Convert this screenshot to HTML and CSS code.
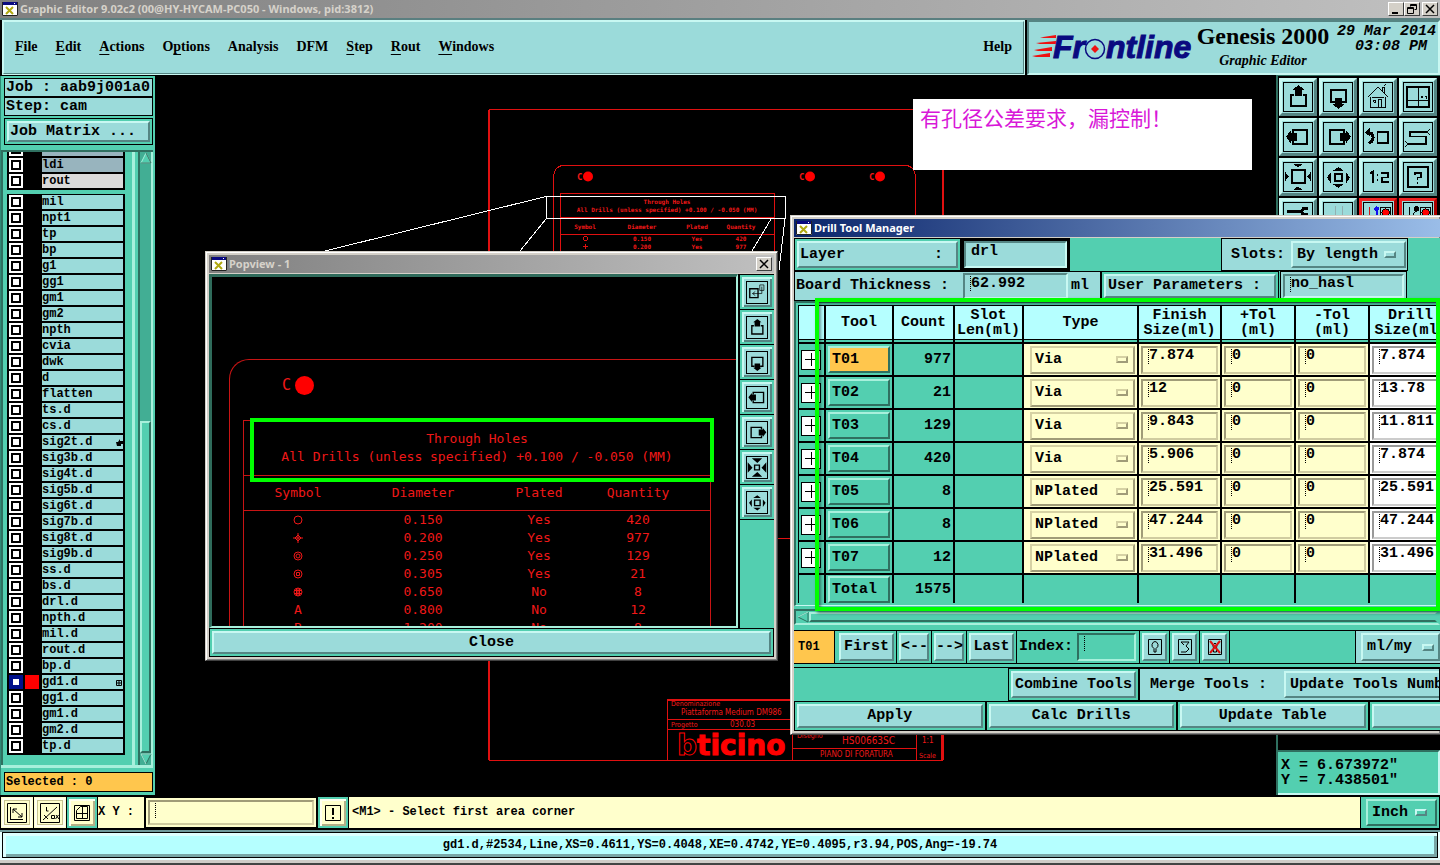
FILE: index.html
```
<!DOCTYPE html>
<html lang="en">
<head>
<meta charset="utf-8">
<title>Graphic Editor 9.02c2</title>
<link rel="stylesheet" href="styles.css">
</head>
<body>
<svg class="defs" aria-hidden="true">
  <symbol id="app" viewBox="0 0 16 14"><path fill="#fff" d="M0 0h16v14H0z"/><path fill="#0a0a80" d="M1 0h14v3H1z"/><path fill="#fff" d="M12 1h1v1h-1z"/><path stroke="#b0a810" stroke-width="2" d="M4 5l7 7M11 5l-7 7"/><path stroke="#222" fill="none" d="M.5 0v13.500h15V0"/></symbol>
  <symbol id="up" viewBox="0 0 29 29"><path d="M10 12H7v12h16V12h-3" fill="none" stroke-width="2"/><path class="f" d="M15 2l6 5h-2v6h-8V7H9z"/></symbol>
  <symbol id="down" viewBox="0 0 29 29"><path d="M11 20H7V7h16v13h-4" fill="none" stroke-width="2"/><path class="f" d="M15 27l6-5h-2v-6h-8v6H9z"/></symbol>
  <symbol id="left" viewBox="0 0 29 29"><path d="M9 10V7h15v15H9v-3" fill="none" stroke-width="2"/><path class="f" d="M2 14l5-6v2h6v9H7v2z"/></symbol>
  <symbol id="right" viewBox="0 0 29 29"><path d="M21 10V7H6v15h15v-3" fill="none" stroke-width="2"/><path class="f" d="M28 14l-5-6v2h-6v9h6v2z"/></symbol>
  <symbol id="in" viewBox="0 0 29 29"><path d="M8 7h14v14H8z" fill="none" stroke-width="2"/><path class="f" d="M10 1h9l-4.500 4zM10 28h9l-4.500-4zM1 9v10l4-5zM28 9v10l-4-5z"/></symbol>
  <symbol id="shrink" viewBox="0 0 29 29"><path d="M11 11h7v7h-7z" fill="none" stroke-width="2"/><path class="f" d="M7 1h15l-7 7zM7 28h15l-7-7zM1 7v15l7-7zM28 7v15l-7-7z"/></symbol>
  <symbol id="out" viewBox="0 0 29 29"><path d="M11 11h8v8h-8z" fill="none" stroke-width="2"/><path class="f" d="M9 8h11l-5-4zM9 22h11l-5 4zM7 10v11l-4-6zM23 10v11l4-6z"/></symbol>
  <symbol id="pop" viewBox="0 0 29 29"><path d="M4 9h12v13H4z" fill="none" stroke-width="2"/><path d="M18.500 3.500h6v8h-6zM21.500 6v10H8m4-3l-4 3 4 3" fill="none"/></symbol>
</svg>

<div class="titlebar app-title">
  <svg class="appicon"><use href="#app"/></svg>
  <h1>Graphic Editor 9.02c2 (00@HY-HYCAM-PC050 - Windows, pid:3812)</h1>
  <div class="winbtns">
    <button aria-label="Minimize"><svg viewBox="0 0 14 12"><path d="M3 9h6v2H3z"/></svg></button>
    <button aria-label="Restore"><svg viewBox="0 0 14 12"><path d="M5.500 3.500V1.500h6v5h-2M2.500 4.500h6v6h-6zM2 5.500h7M5 2.500h7" fill="none" stroke="#000"/></svg></button>
    <button class="apart" aria-label="Close"><svg viewBox="0 0 14 12"><path d="M3 2l8 8M11 2l-8 8" stroke="#000" stroke-width="1.500"/></svg></button>
  </div>
</div>

<header class="head">
  <nav class="menubar">
    <a href="#"><u>F</u>ile</a><a href="#"><u>E</u>dit</a><a href="#"><u>A</u>ctions</a><a href="#">O<u>p</u>tions</a><a href="#">Analysis</a><a href="#">DFM</a><a href="#"><u>S</u>tep</a><a href="#"><u>R</u>out</a><a href="#"><u>W</u>indows</a><a class="help" href="#">Help</a>
  </nav>
  <div class="brand">
    <svg class="frontline" viewBox="0 0 164 34" role="img" aria-label="Frontline">
      <g fill="#e11"><path d="M8 7.500L24 5v3H12zM4 13l20-2v3H8zM2 20l18-3v4H6zM0 26l18-3v4H4z"/></g>
      <text class="logo" x="21" y="28">Fr</text><text class="logo" x="74" y="28">ntline</text>
      <circle cx="63" cy="19" r="9.500" fill="none" stroke="#0a0a80" stroke-width="1.500"/><path d="M59 19l4-4 4 4-4 4z" fill="#e11"/>
    </svg>
    <div class="product"><strong>Genesis 2000</strong><em>Graphic Editor</em></div>
    <time>29 Mar 2014<br>03:08 PM&nbsp;</time>
  </div>
</header>

<main class="work">
  <aside class="side">
    <div class="jobline">Job : aab9j001a0</div>
    <div class="jobline">Step: cam</div>
    <div class="matrix"><button class="raised">Job Matrix ...</button></div>
    <div class="layers">
      <div class="list">
        <div class="group clipped">
          <label class="layer grey"><input type="checkbox"><i></i><span>drl</span></label>
          <label class="layer grey"><input type="checkbox"><i></i><span>ldi</span></label>
          <label class="layer pale"><input type="checkbox"><i></i><span>rout</span></label>
        </div>
        <div class="group">
          <label class="layer"><input type="checkbox"><i></i><span>mil</span></label>
          <label class="layer"><input type="checkbox"><i></i><span>npt1</span></label>
          <label class="layer"><input type="checkbox"><i></i><span>tp</span></label>
          <label class="layer"><input type="checkbox"><i></i><span>bp</span></label>
          <label class="layer"><input type="checkbox"><i></i><span>g1</span></label>
          <label class="layer"><input type="checkbox"><i></i><span>gg1</span></label>
          <label class="layer"><input type="checkbox"><i></i><span>gm1</span></label>
          <label class="layer"><input type="checkbox"><i></i><span>gm2</span></label>
          <label class="layer"><input type="checkbox"><i></i><span>npth</span></label>
          <label class="layer"><input type="checkbox"><i></i><span>cvia</span></label>
          <label class="layer"><input type="checkbox"><i></i><span>dwk</span></label>
          <label class="layer"><input type="checkbox"><i></i><span>d</span></label>
          <label class="layer"><input type="checkbox"><i></i><span>flatten</span></label>
          <label class="layer"><input type="checkbox"><i></i><span>ts.d</span></label>
          <label class="layer"><input type="checkbox"><i></i><span>cs.d</span></label>
          <label class="layer"><input type="checkbox"><i></i><span>sig2t.d<svg class="mark" viewBox="0 0 8 9"><path d="M1 4h2l2-3v2h3v3H6v2H2z"/></svg></span></label>
          <label class="layer"><input type="checkbox"><i></i><span>sig3b.d</span></label>
          <label class="layer"><input type="checkbox"><i></i><span>sig4t.d</span></label>
          <label class="layer"><input type="checkbox"><i></i><span>sig5b.d</span></label>
          <label class="layer"><input type="checkbox"><i></i><span>sig6t.d</span></label>
          <label class="layer"><input type="checkbox"><i></i><span>sig7b.d</span></label>
          <label class="layer"><input type="checkbox"><i></i><span>sig8t.d</span></label>
          <label class="layer"><input type="checkbox"><i></i><span>sig9b.d</span></label>
          <label class="layer"><input type="checkbox"><i></i><span>ss.d</span></label>
          <label class="layer"><input type="checkbox"><i></i><span>bs.d</span></label>
          <label class="layer"><input type="checkbox"><i></i><span>drl.d</span></label>
          <label class="layer"><input type="checkbox"><i></i><span>npth.d</span></label>
          <label class="layer"><input type="checkbox"><i></i><span>mil.d</span></label>
          <label class="layer"><input type="checkbox"><i></i><span>rout.d</span></label>
          <label class="layer"><input type="checkbox"><i></i><span>bp.d</span></label>
          <label class="layer active"><input type="checkbox" checked><i></i><span>gd1.d<svg class="mark" viewBox="0 0 8 9"><path d="M1.500 2.500h5v5h-5zM4 2v6M1 5h6" fill="none" stroke="#000"/></svg></span></label>
          <label class="layer"><input type="checkbox"><i></i><span>gg1.d</span></label>
          <label class="layer"><input type="checkbox"><i></i><span>gm1.d</span></label>
          <label class="layer"><input type="checkbox"><i></i><span>gm2.d</span></label>
          <label class="layer"><input type="checkbox"><i></i><span>tp.d</span></label>
        </div>
      </div>
      <div class="vscroll">
        <svg viewBox="0 0 12 12"><path d="M6 1l5 10H1z" fill="#53cfb0" stroke="#a8f0dc"/><path d="M6 1l5 10H1" fill="none" stroke="#2f7060"/></svg>
        <div class="thumb"></div>
        <svg viewBox="0 0 12 12"><path d="M1 1h10L6 11z" fill="#53cfb0" stroke="#2f7060"/><path d="M11 1H1l5 10" fill="none" stroke="#a8f0dc"/></svg>
      </div>
    </div>
    <div class="selected">Selected : 0</div>
  </aside>

  <section class="canvas">
    <svg class="cad">
      <g transform="translate(-155 -75)">
        <g class="line">
          <path d="M489 760V110" stroke-width="2"/><path d="M489 109.500h454M489 760.500h454"/><path d="M943 110v650" stroke-width="2"/>
          <path d="M553.500 560V178q0-13 13-13h336q13 0 13 13v60"/>
          <path d="M560.500 260v-66.500h214V260M561 217.500h214M561 234.500h214M561 538.500h250"/>
          <path d="M667.500 760v-60.500h150M668 719.500h130M668 729.500h130M792.500 729v31M793 748.500h123M916.500 730v30"/>
          <path d="M667 699.500h130M942 730v30" stroke-width="2"/>
        </g>
        <g class="fill"><circle cx="588" cy="176.500" r="5"/><circle cx="810" cy="176.500" r="5"/><circle cx="880" cy="176.500" r="5"/></g>
        <g class="tiny">
          <text x="577" y="180" class="cc">C</text><text x="799" y="180" class="cc">C</text><text x="869" y="180" class="cc">C</text>
          <text x="667" y="204">Through Holes</text><text x="667" y="212">All Drills (unless specified) +0.100 / -0.050 (MM)</text>
          <text x="585" y="229">Symbol</text><text x="642" y="229">Diameter</text><text x="697" y="229">Plated</text><text x="741" y="229">Quantity</text>
          <text x="642" y="241">0.150</text><text x="697" y="241">Yes</text><text x="741" y="241">420</text>
          <text x="642" y="249">0.200</text><text x="697" y="249">Yes</text><text x="741" y="249">977</text>
        </g>
        <g class="line"><circle cx="585.500" cy="238.500" r="2"/><path d="M583 246.500h5M585.500 244v5"/></g>
        <g class="block">
          <text x="671" y="706" class="s7">Denominazione</text><text x="681" y="715" class="s8">Piattaforma Medium DM986</text>
          <text x="671" y="727" class="s7">Progetto</text><text x="730" y="727" class="s8">030.03</text>
          <text x="797" y="738" class="s7">Disegno</text><text x="842" y="744" class="s10">HS00663SC</text><text x="922" y="743" class="s8">1:1</text>
          <text x="820" y="757" class="s8">PIANO DI FORATURA</text><text x="919" y="758" class="s7">Scale</text>
          <text x="677" y="755" class="bt"><tspan class="hollow">b</tspan>ticino</text>
        </g>
        <g class="lead"><path d="M546.500 196.500h239v22h-239zM546 196.500L325 251M546 219L520 251M771 219L752 251M785 219L779 270"/></g>
      </g>
    </svg>
    <p class="note" lang="zh">有孔径公差要求，漏控制！</p>
  </section>

  <aside class="tools">
    <div class="grid">
      <button aria-label="Pan up"><svg viewBox="0 0 29 29"><use href="#up"/></svg></button>
      <button aria-label="Pan down"><svg viewBox="0 0 29 29"><use href="#down"/></svg></button>
      <button aria-label="Home"><svg viewBox="0 0 29 29"><path d="M4.500 14.500l10-10 10 10M6.500 14v11.500h16V14M8 15h13M14.500 25v-7.500h4V25M10 18h2v2h-2zM19.500 9V4.500h2V11M21 3l2-2" fill="none"/></svg></button>
      <button aria-label="Coordinates"><svg viewBox="0 0 29 29"><path d="M3 4h23v21H3z" fill="none" stroke-width="2"/><path d="M14.500 4v21M3 18.500h23M17 13l3 3M20 13l-3 3M21.500 13l1.500 1.500 1.500-1.500M23 14v3" fill="none"/></svg></button>
      <button aria-label="Pan left"><svg viewBox="0 0 29 29"><use href="#left"/></svg></button>
      <button aria-label="Pan right"><svg viewBox="0 0 29 29"><use href="#right"/></svg></button>
      <button aria-label="Previous view"><svg viewBox="0 0 29 29"><path d="M14 9h11v12H14z" fill="none" stroke-width="2"/><path d="M4 11h4q3 4 0 8l-3 2" fill="none" stroke-width="3"/><path class="f" d="M1 10l5-5v9z"/></svg></button>
      <button aria-label="Snake"><svg viewBox="0 0 29 29"><path d="M24 9H6v5h17v8H4" fill="none" stroke-width="2"/><path d="M24 9l3-3M24 9l3 3M4 22l-3-3M4 22l-3 3" fill="none"/></svg></button>
      <button aria-label="Zoom in"><svg viewBox="0 0 29 29"><use href="#in"/></svg></button>
      <button aria-label="Zoom out"><svg viewBox="0 0 29 29"><use href="#out"/></svg></button>
      <button aria-label="Scale 1:2"><svg viewBox="0 0 29 29"><path d="M6 11l3-2v12M14 11v2M14 17v2M18 10h7v5h-6v5h7" fill="none" stroke-width="2"/></svg></button>
      <button aria-label="Query"><svg viewBox="0 0 29 29"><path d="M4 4h21v21H4z" fill="none" stroke-width="2"/><path d="M11 12v-2h7v5h-4v3M14 20v2" fill="none" stroke-width="2"/></svg></button>
      <button aria-label="Options"><svg viewBox="0 0 29 29"><path d="M3 9h16M25 6h-5l-2 3 2 3h5" fill="none" stroke-width="3"/><path d="M3 16.500l5-2h12l5 3" fill="none"/></svg></button>
      <button aria-label="Grid"><svg viewBox="0 0 29 29"><path d="M3 12.500h23M11.500 3v23M19.500 3v23" fill="none" class="pale"/></svg></button>
      <button class="red" aria-label="Snap"><svg viewBox="0 0 29 29"><path d="M5.500 4v12M2 16h6" stroke="#c11" fill="none"/><path d="M13 7v10" stroke="#11e" stroke-width="2"/><circle cx="13" cy="6" r="2.500" fill="#11e" stroke="none"/><path d="M17.500 4.500h10v12h-10z" fill="none"/><circle cx="22.500" cy="10" r="4" fill="red"/></svg></button>
      <button class="red" aria-label="Measure"><svg viewBox="0 0 29 29"><path d="M5.500 4v12M2 16h6M8 14l5-7M9.500 15v3M12.500 13v5" fill="none"/><circle cx="13" cy="6" r="2.500"/><path d="M17.500 4.500h10v12h-10z" fill="none"/><circle cx="22.500" cy="10" r="4" fill="red"/></svg></button>
    </div>
    <output class="coords">X = 6.673972"<br>Y = 7.438501"</output>
  </aside>
</main>

<footer class="command">
  <button class="ybtn" aria-label="Zoom area"><svg viewBox="0 0 22 22"><path d="M1.500 1.500h19v19h-19zM4.500 5v13M5 17.500h12M7 7l9 8M7 11V7h4M16 11v4h-4" fill="none" stroke="#000"/></svg></button>
  <button class="ybtn" aria-label="Angle"><svg viewBox="0 0 22 22"><path d="M1.500 1.500h19v19h-19zM4 18L18 5M5 13l4 4M7.500 5v4h2M12.500 13.500h3v3h-3zM17 13l3 4M19.500 13l-3 4" fill="none" stroke="#000"/></svg></button>
  <button class="ybtn teal" aria-label="Snap grid"><svg viewBox="0 0 22 22"><path d="M3.500 3.500h15v15h-15zM5.500 8.500l4-4h7v12h-11zM11.500 4v13M5 11.500h12" fill="none" stroke="#000"/></svg></button>
  <label class="xylabel" for="xy">X Y :</label>
  <div class="xybox"><input id="xy" class="field" type="text"></div>
  <button class="ybtn teal" aria-label="Alert"><svg viewBox="0 0 22 22"><path d="M3.500 3.500h15v15h-15z" fill="none" stroke="#000"/><path d="M10 6h2v7h-2zM10 15h2v2h-2z"/></svg></button>
  <div class="message">&lt;M1&gt; - Select first area corner</div>
  <div class="unit"><span class="option green"><select aria-label="Units"><option>Inch</option></select><i></i></span></div>
</footer>
<div class="status"><p>gd1.d,#2534,Line,XS=0.4611,YS=0.4048,XE=0.4742,YE=0.4095,r3.94,POS,Ang=-19.74</p></div>

<section class="window popview" aria-label="Popview">
  <div class="titlebar"><svg class="appicon"><use href="#app"/></svg><h2>Popview - 1</h2><div class="winbtns"><button aria-label="Close window"><svg viewBox="0 0 14 12"><path d="M3 2l8 8M11 2l-8 8" stroke="#000" stroke-width="1.500"/></svg></button></div></div>
  <div class="popbody">
    <div class="view">
      <div class="sheet">
        <div class="cmark"><span>C</span><i></i></div>
        <div class="drills">
          <p>Through Holes<br>All Drills (unless specified) +0.100 / -0.050 (MM)</p>
          <table>
            <colgroup><col class="c1"><col class="c2"><col class="c3"><col class="c4"><col></colgroup>
            <thead><tr><th>Symbol</th><th>Diameter</th><th>Plated</th><th>Quantity</th><th></th></tr></thead>
            <tbody>
              <tr><td><svg viewBox="0 0 10 10"><circle cx="5" cy="5" r="4"/></svg></td><td>0.150</td><td>Yes</td><td>420</td></tr>
              <tr><td><svg viewBox="0 0 10 10"><path d="M5 0v10M0 5h10M5 2l3 3-3 3-3-3z"/></svg></td><td>0.200</td><td>Yes</td><td>977</td></tr>
              <tr><td><svg viewBox="0 0 10 10"><circle cx="5" cy="5" r="4"/><circle cx="5" cy="5" r="2"/></svg></td><td>0.250</td><td>Yes</td><td>129</td></tr>
              <tr><td><svg viewBox="0 0 10 10"><circle cx="5" cy="5" r="4"/><path d="M3.500 3.500h3v3h-3z"/></svg></td><td>0.305</td><td>Yes</td><td>21</td></tr>
              <tr><td><svg viewBox="0 0 10 10"><circle cx="5" cy="5" r="4"/><path d="M3.500 1v8M6.500 1v8M1 3.500h8M1 6.500h8M5 1v8"/></svg></td><td>0.650</td><td>No</td><td>8</td></tr>
              <tr><td>A</td><td>0.800</td><td>No</td><td>12</td></tr>
              <tr><td>B</td><td>1.200</td><td>No</td><td>8</td></tr>
            </tbody>
          </table>
        </div>
      </div>
      <div class="highlight pophl"></div>
    </div>
    <div class="poptools">
      <button aria-label="Detach"><svg viewBox="0 0 29 29"><use href="#pop"/></svg></button>
      <button aria-label="Up"><svg viewBox="0 0 29 29"><use href="#up"/></svg></button>
      <button aria-label="Down"><svg viewBox="0 0 29 29"><use href="#down"/></svg></button>
      <button aria-label="Left"><svg viewBox="0 0 29 29"><use href="#left"/></svg></button>
      <button aria-label="Right"><svg viewBox="0 0 29 29"><use href="#right"/></svg></button>
      <button aria-label="Shrink"><svg viewBox="0 0 29 29"><use href="#shrink"/></svg></button>
      <button aria-label="Grow"><svg viewBox="0 0 29 29"><use href="#out"/></svg></button>
    </div>
  </div>
  <div class="cell popclose"><button class="raised">Close</button></div>
</section>

<section class="window dtm" aria-label="Drill Tool Manager">
  <div class="titlebar blue"><svg class="appicon"><use href="#app"/></svg><h2>Drill Tool Manager</h2></div>
  <div class="dbody">
    <div class="drow r1">
      <div class="cell w-layer"><button class="raised between"><span>Layer</span><span>:</span></button></div>
      <div class="focus"><input class="plain" aria-label="Layer name" value="drl"></div>
      <div class="panel slots"><label for="slots">Slots:</label><span class="option"><select id="slots"><option>By length</option></select><i></i></span></div>
    </div>
    <div class="drow r2">
      <div class="panel thick"><label for="thick">Board Thickness :</label><input id="thick" class="field" value="62.992"><span>ml</span></div>
      <div class="cell w-user"><button class="raised">User Parameters :</button></div>
      <div class="panel hasl"><input class="field" aria-label="User parameters" value="no_hasl"></div>
    </div>
    <div class="twrap">
      <table class="tooltable">
        <colgroup><col class="k0"><col class="k1"><col class="k2"><col class="k3"><col class="k4"><col class="k5"><col class="k6"><col class="k6"><col class="k5"></colgroup>
        <thead><tr><th></th><th>Tool</th><th>Count</th><th>Slot<br>Len(ml)</th><th>Type</th><th>Finish<br>Size(ml)</th><th>+Tol<br>(ml)</th><th>-Tol<br>(ml)</th><th>Drill<br>Size(ml)</th></tr></thead>
        <tbody>
          <tr><td><button class="plus" aria-label="Expand T01"></button></td><td><button class="tool on">T01</button></td><td>977</td><td></td><td class="y"><span class="option yel"><select aria-label="Type T01"><option>Via</option></select><i></i></span></td><td class="y"><input class="field" aria-label="Finish size T01" value="7.874"></td><td class="y"><input class="field" aria-label="Plus tolerance T01" value="0"></td><td class="y"><input class="field" aria-label="Minus tolerance T01" value="0"></td><td class="w"><input class="field" aria-label="Drill size T01" value="7.874"></td></tr>
          <tr><td><button class="plus" aria-label="Expand T02"></button></td><td><button class="tool">T02</button></td><td>21</td><td></td><td class="y"><span class="option yel"><select aria-label="Type T02"><option>Via</option></select><i></i></span></td><td class="y"><input class="field" aria-label="Finish size T02" value="12"></td><td class="y"><input class="field" aria-label="Plus tolerance T02" value="0"></td><td class="y"><input class="field" aria-label="Minus tolerance T02" value="0"></td><td class="w"><input class="field" aria-label="Drill size T02" value="13.78"></td></tr>
          <tr><td><button class="plus" aria-label="Expand T03"></button></td><td><button class="tool">T03</button></td><td>129</td><td></td><td class="y"><span class="option yel"><select aria-label="Type T03"><option>Via</option></select><i></i></span></td><td class="y"><input class="field" aria-label="Finish size T03" value="9.843"></td><td class="y"><input class="field" aria-label="Plus tolerance T03" value="0"></td><td class="y"><input class="field" aria-label="Minus tolerance T03" value="0"></td><td class="w"><input class="field" aria-label="Drill size T03" value="11.811"></td></tr>
          <tr><td><button class="plus" aria-label="Expand T04"></button></td><td><button class="tool">T04</button></td><td>420</td><td></td><td class="y"><span class="option yel"><select aria-label="Type T04"><option>Via</option></select><i></i></span></td><td class="y"><input class="field" aria-label="Finish size T04" value="5.906"></td><td class="y"><input class="field" aria-label="Plus tolerance T04" value="0"></td><td class="y"><input class="field" aria-label="Minus tolerance T04" value="0"></td><td class="w"><input class="field" aria-label="Drill size T04" value="7.874"></td></tr>
          <tr><td><button class="plus" aria-label="Expand T05"></button></td><td><button class="tool">T05</button></td><td>8</td><td></td><td class="y"><span class="option yel"><select aria-label="Type T05"><option>NPlated</option></select><i></i></span></td><td class="y"><input class="field" aria-label="Finish size T05" value="25.591"></td><td class="y"><input class="field" aria-label="Plus tolerance T05" value="0"></td><td class="y"><input class="field" aria-label="Minus tolerance T05" value="0"></td><td class="w"><input class="field" aria-label="Drill size T05" value="25.591"></td></tr>
          <tr><td><button class="plus" aria-label="Expand T06"></button></td><td><button class="tool">T06</button></td><td>8</td><td></td><td class="y"><span class="option yel"><select aria-label="Type T06"><option>NPlated</option></select><i></i></span></td><td class="y"><input class="field" aria-label="Finish size T06" value="47.244"></td><td class="y"><input class="field" aria-label="Plus tolerance T06" value="0"></td><td class="y"><input class="field" aria-label="Minus tolerance T06" value="0"></td><td class="w"><input class="field" aria-label="Drill size T06" value="47.244"></td></tr>
          <tr><td><button class="plus" aria-label="Expand T07"></button></td><td><button class="tool">T07</button></td><td>12</td><td></td><td class="y"><span class="option yel"><select aria-label="Type T07"><option>NPlated</option></select><i></i></span></td><td class="y"><input class="field" aria-label="Finish size T07" value="31.496"></td><td class="y"><input class="field" aria-label="Plus tolerance T07" value="0"></td><td class="y"><input class="field" aria-label="Minus tolerance T07" value="0"></td><td class="w"><input class="field" aria-label="Drill size T07" value="31.496"></td></tr>
          <tr class="total"><td></td><td><button class="tool">Total</button></td><td>1575</td><td></td><td></td><td></td><td></td><td></td><td></td></tr>
        </tbody>
      </table>
      <div class="highlight tablehl"></div>
    </div>
    <div class="hscroll"><svg viewBox="0 0 12 12"><path d="M11 1v10L1 6z" fill="#53cfb0" stroke="#2f7060"/><path d="M1 6l10-5" stroke="#a8f0dc"/></svg><div></div></div>
    <div class="drow nav">
      <div class="current">T01</div>
      <div class="cell n1"><button class="raised">First</button></div>
      <div class="cell n2"><button class="raised">&lt;--</button></div>
      <div class="cell n2"><button class="raised">--&gt;</button></div>
      <div class="cell n3"><button class="raised">Last</button></div>
      <div class="index"><label for="idx">Index:</label><input id="idx" class="field"></div>
      <div class="cell n4"><button class="raised" aria-label="Highlight"><svg viewBox="0 0 14 16"><path d="M.500.500h13v15H.5zM6 13V9.500Q3.500 8 4 5.500q1-3 3-3t3 3Q10.500 8 8 9.500V13z" fill="none" stroke="#000"/></svg></button></div>
      <div class="cell n4"><button class="raised" aria-label="Snake"><svg viewBox="0 0 14 16"><path d="M.500.500h13v15H.5zM3 3h8L8 7l3 3-3 3H3M3 3l3 3" fill="none" stroke="#000"/></svg></button></div>
      <div class="cell n4"><button class="raised" aria-label="Highlight off"><svg viewBox="0 0 14 16"><path d="M.500.500h13v15H.5zM5.500 13V9q-2-3 1.500-5 3 2 1.500 5v4z" fill="none" stroke="#000"/><path d="M2 2l10 12M12 2L2 14" stroke="#d11" stroke-width="2"/></svg></button></div>
      <div class="panel units"><span class="option"><select aria-label="Tool units"><option>ml/my</option></select><i></i></span></div>
    </div>
    <div class="drow merge">
      <div class="cell m1"><button class="raised">Combine Tools</button></div>
      <div class="panel m2"><span>Merge Tools :</span><button class="raised">Update Tools Number</button></div>
    </div>
    <div class="drow acts">
      <div class="cell"><button class="raised">Apply</button></div>
      <div class="cell"><button class="raised">Calc Drills</button></div>
      <div class="cell"><button class="raised">Update Table</button></div>
      <div class="cell"><button class="raised" aria-label="Close"></button></div>
    </div>
  </div>
</section>
</body>
</html>
```
FILE: styles.css
```
:root {
  --teal: #53cfb0;
  --cyan: #9bdbda;
  --ice: #b5ffff;
  --cream: #ffffcc;
  --gold: #ffc64d;
  --hi: #c8f8f2;
  --lo: #558583;
  --green-hi: #a8f0dc;
  --green-lo: #2f7060;
  --mono: "Liberation Mono", monospace;
}
* { box-sizing: border-box; }
body {
  margin: 0;
  height: 100vh;
  display: flex;
  flex-direction: column;
  overflow: hidden;
  background: #000;
  color: #000;
  font: bold 15px/16px var(--mono);
}
button, input, select { font: inherit; color: inherit; margin: 0; padding: 0; border-radius: 0; outline: 0; }
button { border: 0; white-space: nowrap; }
h1, h2, p { margin: 0; }
.defs { position: absolute; width: 0; height: 0; }

.titlebar { display: flex; align-items: center; height: 18px; flex: none; background: linear-gradient(90deg, #808080, #c0c0c0); }
.titlebar h1, .titlebar h2 { flex: 1; font: bold 11px/16px "Noto Sans", sans-serif; color: #d6d2ca; white-space: nowrap; }
.titlebar.blue { background: linear-gradient(90deg, #0a246a, #9abde8); }
.titlebar.blue h2 { color: #fff; }
.appicon { width: 16px; height: 14px; margin: 0 2px; flex: none; }
.winbtns { display: flex; margin-right: 2px; }
.winbtns button { width: 16px; height: 14px; background: #d4d0c8; border: 1px solid; border-color: #fff #404040 #404040 #fff; }
.winbtns svg { display: block; width: 14px; height: 12px; }
.winbtns .apart { margin-left: 2px; }

.head { display: flex; flex: none; height: 57px; border-top: 2px solid #5a7f80; }
.menubar {
  flex: 1;
  display: flex;
  align-items: center;
  gap: 18px;
  padding: 0 11px 2px;
  background: var(--cyan);
  border: 2px solid;
  border-color: var(--hi) var(--lo) var(--lo) var(--hi);
  outline: 1px solid var(--hi);
  outline-offset: -1px;
  margin-left: 2px;
}
.menubar a { color: #000; text-decoration: none; font: bold 14px/18px "Liberation Serif", serif; }
.menubar u { text-underline-offset: 3px; }
.menubar .help { margin-left: auto; }
.brand {
  width: 413px;
  display: flex;
  align-items: flex-start;
  margin-left: 2px;
  padding: 1px 2px 0 3px;
  background: var(--cyan);
  border: 2px solid;
  border-color: var(--lo) var(--hi) var(--hi) var(--lo);
}
.frontline { width: 164px; height: 34px; margin-top: 7px; flex: none; }
.logo { font: italic bold 32px "Liberation Sans", sans-serif; fill: #0a0a80; stroke: #0a0a80; stroke-width: 1px; }
.product { display: flex; flex-direction: column; align-items: center; width: 134px; white-space: nowrap; }
.product strong { font: bold 24px/26px "Liberation Serif", serif; }
.product em { font: italic bold 14px/24px "Liberation Serif", serif; }
.brand time { flex: 1; text-align: right; font-style: italic; line-height: 15px; white-space: nowrap; padding-top: 1px; }

.work { flex: 1; min-height: 0; display: flex; }
.side { width: 155px; flex: none; display: flex; flex-direction: column; background: var(--teal); padding: 2px 2px 3px 3px; margin-top: 1px; border: 1px solid #2f8a76; border-width: 0 0 0 1px; }
.jobline { height: 19px; line-height: 18px; background: var(--cyan); border: 1px solid #000; padding-left: 1px; white-space: nowrap; overflow: hidden; }
.matrix { border: 1px solid #000; margin-top: 2px; padding: 2px; height: 27px; }
.raised { display: block; width: 100%; height: 100%; background: var(--cyan); border: 2px solid; border-color: var(--hi) var(--lo) var(--lo) var(--hi); }
.matrix .raised { text-align: left; padding-left: 1px; line-height: 16px; }
.layers { flex: 1; min-height: 0; display: flex; margin: 5px 0 4px -3px; border-top: 2px solid var(--green-lo); border-bottom: 3px solid var(--green-hi); }
.list { width: 135px; display: flex; flex-direction: column; padding-left: 4px; padding-bottom: 5px; border-left: 2px solid var(--green-lo); border-right: 3px solid var(--green-hi); overflow: hidden; }
.group { width: 118px; border: 1px solid #000; border-width: 0 1px 1px; padding: 0 1px; background: #000; box-shadow: 0 3px 0 var(--teal); }
.group.clipped { height: 38px; flex: none; display: flex; flex-direction: column; justify-content: flex-end; margin-bottom: 4px; overflow: hidden; }
.layer { display: flex; height: 16px; flex: none; align-items: center; }
.layer input { appearance: none; width: 14px; height: 14px; background: #fff; border: 2px solid #fff; box-shadow: inset 0 0 0 2px #000; flex: none; }
.layer i { width: 14px; height: 14px; margin: 0 3px 0 2px; flex: none; }
.layer span { flex: 1; display: flex; justify-content: space-between; align-items: center; height: 14px; line-height: 14px; font-size: 12px; background: var(--cyan); }
.layer.grey span { background: #98b4be; }
.layer.pale span { background: #dadada; }
.layer.active input { border-color: #00108c; box-shadow: inset 0 0 0 2px #00108c; }
.layer.active i { background: #f00; }
.mark { width: 8px; height: 9px; }
.vscroll { width: 15px; margin-left: 3px; display: flex; flex-direction: column; align-items: center; background: #42ae94; border: 2px solid; border-color: var(--green-lo) var(--green-hi) var(--green-hi) var(--green-lo); border-width: 0 2px; }
.vscroll svg { width: 12px; height: 12px; flex: none; }
.thumb { width: 11px; flex: 1; margin-top: 257px; background: var(--teal); border: 2px solid; border-color: var(--green-hi) var(--green-lo) var(--green-lo) var(--green-hi); }
.selected { height: 20px; line-height: 18px; font-size: 12px; padding-left: 1px; background: var(--gold); border: 1px solid #000; }

.canvas { flex: 1; min-width: 0; position: relative; overflow: hidden; }
.cad { position: absolute; inset: 0; width: 100%; height: 100%; }
.line { fill: none; stroke: #e01010; shape-rendering: crispEdges; }
.fill { fill: #f00; }
.lead { fill: none; stroke: #fff; shape-rendering: crispEdges; }
.tiny { font: bold 6px "DejaVu Sans Mono", monospace; fill: #f01818; text-anchor: middle; }
.tiny .cc { font-size: 9px; text-anchor: start; }
.block { font-family: "DejaVu Sans Condensed", "DejaVu Sans", sans-serif; font-weight: normal; fill: #f01818; }
.s7 { font-size: 7px; }
.s8 { font-size: 8px; }
.s10 { font-size: 10px; }
.bt { font: bold 28px "DejaVu Sans", sans-serif; fill: #f00; stroke: #f00; }
.hollow { fill: none; }
.note { position: absolute; top: 24px; right: 24px; width: 339px; height: 71px; padding: 6px 7px; background: #fff; color: #d818d8; font: 400 21px/24px "Noto Sans CJK SC", sans-serif; white-space: nowrap; }

.tools { width: 164px; flex: none; display: flex; flex-direction: column; justify-content: space-between; border-left: 2px solid var(--green-lo); border-top: 1px solid var(--green-lo); }
.grid { display: grid; grid-template-columns: repeat(4, 38px); gap: 2px; padding: 2px 1px; }
.grid button { height: 38px; display: grid; place-items: center; background: var(--cyan); border: 3px solid; border-color: var(--hi) var(--lo) var(--lo) var(--hi); }
.grid svg { width: 30px; height: 30px; border: 1px solid #000; }
.grid .red { border-color: #e22 #a00 #a00 #e22; }
.grid svg, .poptools svg { stroke: #000; shape-rendering: crispEdges; }
.f { fill: #000; stroke: none; }
.pale { stroke: #90aeb0; }
.coords { height: 45px; padding: 6px 3px; line-height: 15px; font-size: 15px; background: var(--teal); border: 2px solid; border-color: var(--green-lo) var(--hi) var(--hi) var(--green-lo); border-left: 0; }

.command { display: flex; flex: none; height: 35px; padding: 2px 1px; gap: 1px; }
.ybtn { width: 32px; flex: none; display: grid; place-items: center; background: var(--cream); border: 1px solid var(--cream); box-shadow: inset 0 0 0 2px #fffff0, inset 0 0 0 3px #c8c490; }
.ybtn svg { width: 22px; height: 22px; }
.ybtn.teal { width: 30px; border: 2px solid var(--teal); box-shadow: inset 1px 1px 0 1px #fffff0, inset -2px -2px 0 #b5b088; }
.xylabel { width: 46px; line-height: 31px; font-size: 12px; background: var(--cream); }
.xybox { width: 172px; padding: 2px; background: var(--cream); border: 1px solid #000; }
.message { flex: 1; background: var(--cream); line-height: 31px; font-size: 12px; padding-left: 3px; }
.unit { width: 78px; padding: 2px 2px 2px 5px; background: var(--teal); }

.field {
  display: block;
  width: 100%;
  height: 100%;
  min-width: 0;
  padding: 0 0 5px 6px;
  border: 2px solid;
  border-color: #a09c78 #d0cca0 #d0cca0 #a09c78;
  background: repeating-linear-gradient(#000 0 1px, transparent 1px 2px) 5px 1px / 1px 15px no-repeat;
}
.option { display: flex; align-items: center; width: 100%; height: 100%; padding: 0 8px 0 4px; background: var(--cyan); border: 2px solid; border-color: var(--hi) var(--lo) var(--lo) var(--hi); }
.option select { appearance: none; flex: 1; min-width: 0; border: 0; background: none; }
.option i { width: 12px; height: 7px; flex: none; border: 2px solid; border-color: var(--hi) var(--lo) var(--lo) var(--hi); }
.option.green { background: var(--teal); border-color: var(--green-hi) var(--green-lo) var(--green-lo) var(--green-hi); }
.option.yel { background: var(--cream); border-color: #d6d2a4 #a09c78 #a09c78 #d6d2a4; padding: 0 5px 0 3px; }
.option.yel i { border-color: #d6d2a4 #a09c78 #a09c78 #d6d2a4; }

.status { flex: none; height: 35px; padding: 2px 2px 7px; background: linear-gradient(#6f9a9c 2px, #e8ffff 2px 30px, #d0ccc8 30px 33px, #444 33px); }
.status p { height: 26px; line-height: 22px; font-size: 12px; text-align: center; background: var(--ice); border: 1px solid #000; box-shadow: inset 3px 3px 0 #dff, inset -3px -3px 0 #79a6a6; padding-top: 1px; }

.window { position: absolute; background: #d4d0c8; border: 1px solid; border-color: #d4d0c8 #404040 #404040 #d4d0c8; box-shadow: inset 1px 1px 0 #fff, inset -1px -1px 0 #808080; padding: 3px; }
.cell { border: 1px solid #000; padding: 2px; background: var(--teal); }
.panel { display: flex; align-items: center; border: 1px solid #000; background: var(--cyan); white-space: nowrap; }

.popview { left: 205px; top: 251px; width: 573px; }
.popview .titlebar { margin-bottom: 1px; }
.popbody { display: flex; height: 354px; background: #000; }
.view { flex: 1; position: relative; overflow: hidden; border: 3px solid; border-color: #2f6b5b var(--green-hi) var(--green-hi) #2f6b5b; border-width: 3px 2px 2px 3px; }
.sheet { margin: 82px 0 0 17px; border: 1px solid #c81414; border-width: 1px 0 0 1px; border-top-left-radius: 20px; padding: 15px 0 0 13px; color: #f01818; font: 13px/18px "DejaVu Sans Mono", monospace; }
.cmark { display: flex; align-items: center; gap: 4px; height: 20px; padding-left: 39px; font-size: 15px; }
.cmark i { width: 19px; height: 19px; border-radius: 50%; background: #f00; }
.drills { width: 468px; margin-top: 25px; border: 1px solid #c81414; border-bottom: 0; }
.drills p { height: 54px; padding-top: 9px; text-align: center; white-space: nowrap; }
.drills table { width: 100%; table-layout: fixed; border-collapse: collapse; text-align: center; }
.drills th { height: 35px; padding: 0; font-weight: normal; border: 1px solid #c81414; border-width: 1px 0; }
.drills td { height: 18px; padding: 0; }
.drills svg { display: block; width: 10px; height: 10px; margin: 0 auto; fill: none; stroke: #f01818; }
.c1 { width: 108px; } .c2 { width: 142px; } .c3 { width: 90px; } .c4 { width: 108px; }
.highlight { position: absolute; border: 4px solid #0f0; pointer-events: none; }
.pophl { left: 38px; top: 141px; width: 464px; height: 64px; }
.poptools { width: 34px; margin-left: 2px; padding-top: 1px; display: flex; flex-direction: column; gap: 1px; background: linear-gradient(#000 246px, var(--teal) 246px); }
.poptools button { height: 34px; border: 2px solid var(--teal); background: var(--cyan); display: grid; place-items: center; box-shadow: inset 2px 2px 0 var(--hi), inset -2px -2px 0 var(--lo); }
.poptools svg { width: 22px; height: 23px; border: 1px solid #000; shape-rendering: auto; }
.popclose { height: 29px; }

.dtm { left: 790px; right: 0; top: 215px; padding-right: 0; border-right: 0; overflow: hidden; }
.dtm .titlebar { margin-bottom: 1px; }
.dbody { background: var(--teal); overflow: hidden; }
.drow { display: flex; }
.r1 { height: 33px; }
.w-layer { width: 167px; }
.between { display: flex; justify-content: space-between; align-items: center; padding: 0 13px 0 1px; }
.focus { width: 109px; border: 3px solid #000; }
.plain { display: block; width: 100%; height: 100%; background: var(--cyan); border: 2px solid; border-color: var(--lo) var(--hi) var(--hi) var(--lo); padding: 0 0 6px 5px; }
.slots { width: 187px; margin-left: 151px; padding: 2px 1px 2px 9px; gap: 6px; }
.r2 { height: 30px; }
.thick { width: 307px; padding: 1px 1px; }
.thick .field { width: 105px; margin: 0 3px 0 14px; }
.panel .field { border-color: var(--lo) var(--hi) var(--hi) var(--lo); }
.w-user { width: 178px; }
.w-user .raised { text-align: left; padding-left: 2px; }
.hasl { width: 127px; margin-left: 1px; padding: 2px; }
.twrap { position: relative; padding: 2px 0 2px 2px; border: 2px solid var(--green-lo); border-width: 2px 0 0 2px; border-bottom: 1px solid var(--hi); }
.tooltable { width: 654px; table-layout: fixed; border-spacing: 0; border-left: 1px solid #000; }
.k0 { width: 27px; } .k1 { width: 68px; } .k2 { width: 61px; } .k3 { width: 69px; } .k4 { width: 115px; } .k5 { width: 83px; } .k6 { width: 74px; }
.tooltable th { height: 39px; padding: 0 0 3px; line-height: 15px; border: 2px solid #000; border-width: 1px 2px 2px 0; background: linear-gradient(to top, var(--teal) 2px, #000 2px 3px, var(--ice) 3px) padding-box; }
.tooltable td { height: 33px; padding: 1px 2px; border: 2px solid #000; border-width: 0 2px 2px 0; text-align: right; }
.tooltable .total td { height: 28px; border-bottom: 0; padding: 1px 2px 0; }
.tooltable .y { background: var(--cream); }
.tooltable .w { background: #fff; }
.tooltable .field { height: 28px; padding-bottom: 8px; }
.tooltable .option { height: 28px; margin-left: 4px; width: 105px; }
.tooltable .w .field { border-color: #999 #ccc #ccc #999; }
.tool { display: block; width: 100%; height: 27px; text-align: left; padding-left: 2px; background: none; border: 2px solid; border-color: var(--green-hi) var(--green-lo) var(--green-lo) var(--green-hi); }
.tool.on { background: var(--gold); }
.plus { display: block; width: 20px; height: 20px; border: 1px solid #000; background: linear-gradient(#000, #000) 3px 8px / 13px 1px no-repeat, linear-gradient(#000, #000) 9px 2px / 1px 13px no-repeat, #fff; }
.tablehl { left: 19px; right: 0; top: -5px; bottom: -6px; box-shadow: 2px 2px 3px rgba(0,0,0,.5), inset 2px 2px 3px rgba(0,0,0,.4); }
.hscroll { display: flex; align-items: center; height: 16px; margin: 3px 0 5px; padding: 1px; border: 2px solid; border-color: var(--green-lo) transparent var(--green-hi) var(--green-lo); }
.hscroll svg { width: 12px; height: 12px; }
.hscroll div { flex: 1; height: 10px; border: 2px solid; border-color: var(--green-hi) transparent var(--green-lo) var(--green-hi); }
.nav { height: 34px; border: 1px solid #000; border-width: 1px 0; background: var(--teal); }
.nav .cell { border-width: 0 1px 0 0; padding: 2px; }
.current { width: 41px; margin-right: 2px; line-height: 32px; font-size: 12px; padding-left: 4px; background: var(--gold); border-right: 1px solid #000; }
.n1 { width: 60px; } .n2 { width: 35px; } .n3 { width: 50px; } .n4 { width: 30px; }
.n4 .raised { display: grid; place-items: center; }
.n4 svg { width: 14px; height: 16px; }
.index { display: flex; align-items: center; width: 123px; padding: 2px 3px 2px 2px; gap: 4px; border-right: 1px solid #000; }
.index .field { border-color: var(--green-lo) var(--green-hi) var(--green-hi) var(--green-lo); flex: 1; }
.units { width: 85px; flex: none; margin-left: auto; border-width: 0 0 0 1px; padding: 2px 0 2px 5px; }
.units .option { padding-right: 4px; }
.merge { margin-top: 3px; height: 34px; border-top: 1px solid #000; justify-content: flex-start; padding-left: 214px; }
.m1 { width: 131px; flex: none; }
.m2 { flex: 1; padding: 2px 0 2px 10px; gap: 17px; min-width: 0; overflow: hidden; }
.m2 .raised { flex: none; width: 190px; text-align: left; padding-left: 4px; }
.acts { height: 30px; width: 766px; }
.acts .cell { flex: 1; }
```
